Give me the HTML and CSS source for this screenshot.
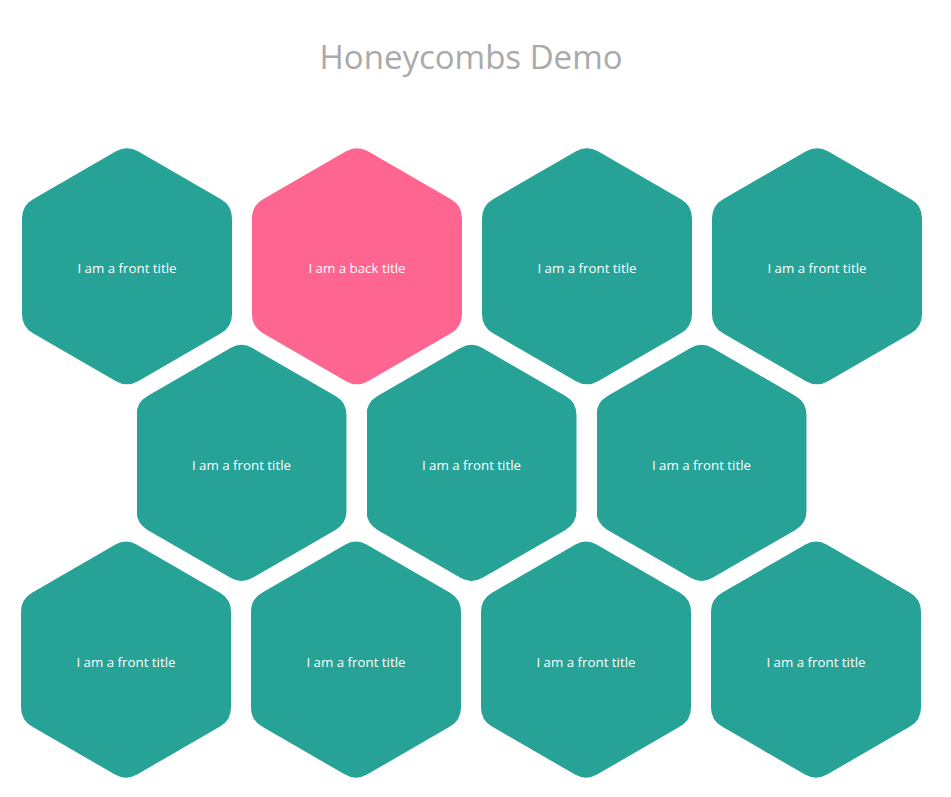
FILE: index.html
```html
<!DOCTYPE html>
<html lang="en">
<head>
<meta charset="utf-8">
<title>Honeycombs Demo</title>
<link rel="stylesheet" href="styles.css">
</head>
<body>
<h1 class="title">Honeycombs Demo</h1>
<div class="honeycombs">
  <div class="row row-a">
    <div class="hex"><span>I am a front title</span></div>
    <div class="hex hex-back"><span>I am a back title</span></div>
    <div class="hex"><span>I am a front title</span></div>
    <div class="hex"><span>I am a front title</span></div>
  </div>
  <div class="row row-b">
    <div class="hex"><span>I am a front title</span></div>
    <div class="hex"><span>I am a front title</span></div>
    <div class="hex"><span>I am a front title</span></div>
  </div>
  <div class="row row-c">
    <div class="hex"><span>I am a front title</span></div>
    <div class="hex"><span>I am a front title</span></div>
    <div class="hex"><span>I am a front title</span></div>
    <div class="hex"><span>I am a front title</span></div>
  </div>
</div>
</body>
</html>
```
FILE: styles.css
```css
html, body {
  margin: 0;
  padding: 0;
  background: #ffffff;
}
body {
  font-family: "Open Sans", "Liberation Sans", sans-serif;
  width: 951px;
  overflow: hidden;
}
.title {
  margin: 0;
  padding-top: 34px;
  padding-right: 9px;
  font-size: 33px;
  font-weight: 400;
  line-height: normal;
  color: #aaaaaa;
  text-align: center;
}
.honeycombs {
  margin-top: 66px;
  padding-left: 22px;
}
.row {
  display: flex;
  gap: 20px;
}
.row + .row {
  margin-top: -45.8px;
}
.row-b {
  margin-left: 114.5px;
}
.row-c {
  margin-left: -1px;
}
.hex {
  flex: 0 0 auto;
  width: 210px;
  height: 242.49px;
  background: #26a296;
  clip-path: path("M94,6.35 A22,22 0 0 1 116,6.35 L199,54.27 A22,22 0 0 1 210,73.32 L210,169.17 A22,22 0 0 1 199,188.22 L116,236.14 A22,22 0 0 1 94,236.14 L11,188.22 A22,22 0 0 1 0,169.17 L0,73.32 A22,22 0 0 1 11,54.27 Z");
  display: flex;
  align-items: center;
  justify-content: center;
  color: #ffffff;
  font-size: 13.3px;
  padding-top: 4px;
  box-sizing: border-box;
}
.hex-back {
  background: #ff6591;
}
```
